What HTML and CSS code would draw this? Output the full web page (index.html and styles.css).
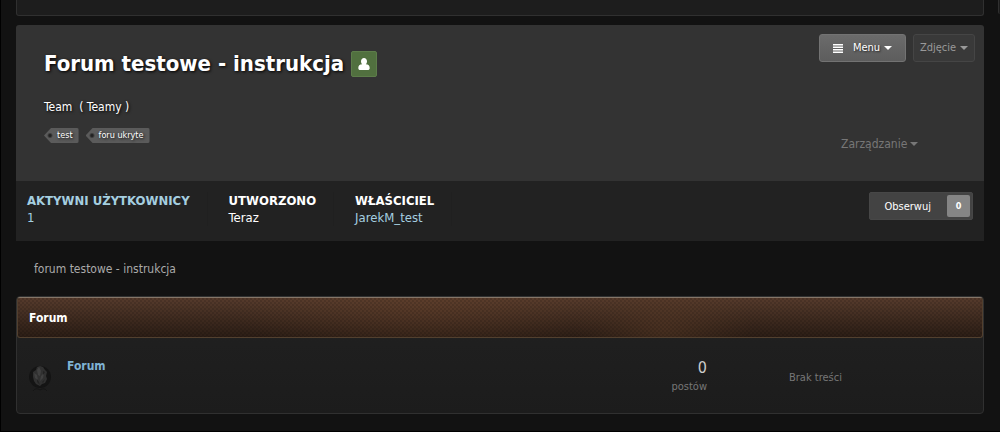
FILE: index.html
```html
<!DOCTYPE html>
<html lang="pl">
<head>
    <meta charset="utf-8">
    <title>Forum testowe - instrukcja</title>
    <meta name="viewport" content="width=device-width">
    <link rel="stylesheet" href="styles.css">
</head>
<body>
    <div class="top-row">
        <div class="top-panel"></div>
        <div class="top-side"></div>
    </div>

    <div class="wrap">
        <div class="club-header">
            <div class="club-info">
                <div class="club-title">
                    <h1>Forum testowe - instrukcja</h1>
                    <span class="member-badge">
                        <svg width="12" height="12" viewBox="0 0 12 12" fill="#fff"><path d="M6 0C7.700 0 9 1.300 9 3.200C9 4.600 8.500 5.600 7.800 6.200C10.500 6.200 11.700 7.800 11.700 9.900C11.700 11.200 10.900 12 9.700 12H2.300C1.100 12 .3 11.200 .3 9.900C.3 7.800 1.500 6.200 4.200 6.200C3.500 5.600 3 4.600 3 3.200C3 1.300 4.300 0 6 0z"/></svg>
                    </span>
                </div>
                <div class="club-type">Team&nbsp; ( Teamy )</div>
                <div class="tags">
                    <a href="#" class="tag">test</a>
                    <a href="#" class="tag">foru ukryte</a>
                </div>
            </div>
            <div class="club-actions">
                <div class="btn-row">
                    <button type="button" class="btn btn-menu">
                        <svg width="10" height="9" viewBox="0 0 10 9" fill="#fff"><path d="M0 0h10v1.500H0zM0 2.500h10V4H0zM0 5h10v1.500H0zM0 7.500h10V9H0z"/></svg>
                        <span>Menu</span><i class="caret"></i>
                    </button>
                    <button type="button" class="btn btn-photo"><span>Zdjęcie</span><i class="caret"></i></button>
                </div>
                <button type="button" class="btn-manage"><span>Zarządzanie</span><i class="caret"></i></button>
            </div>
        </div>

        <div class="club-stats">
            <div class="stat">
                <a href="#"><strong>AKTYWNI UŻYTKOWNICY</strong><br>1</a>
            </div>
            <div class="stat"><strong>UTWORZONO</strong><br>Teraz</div>
            <div class="stat"><strong>WŁAŚCICIEL</strong><br><a href="#">JarekM_test</a></div>
            <button type="button" class="btn-follow">Obserwuj <span class="count">0</span></button>
        </div>

        <div class="breadcrumb">forum testowe - instrukcja</div>

        <div class="forum-box">
            <h2>Forum</h2>
            <table class="forum-table">
                <tr>
                    <td class="cell-icon">
                        <svg width="26" height="28" viewBox="0 0 26 28">
                            <circle cx="13" cy="13" r="11" fill="#141414"/>
                            <path d="M6 8l3-2 1-3 3-1 3 1 2 3 2 2-1 4 1 3-2 4-3 1-2 2-4-2-2-3-1-4z" fill="#303030"/>
                            <path d="M10 6l2-3 2 4-1 5-2-1zM14 12l3-3-1 5-3 3zM7 9l3 2 1 5-3-2z" fill="#404040"/>
                            <path d="M10 15l2 3 1 3-3-3zM16 7l2 1-2 3zM15 18l3-3-2 4z" fill="#222"/>
                            <path d="M6 27q3-4 7-1 4-3 7 1" fill="none" stroke="#151515"/>
                        </svg>
                    </td>
                    <td class="cell-name"><a href="#">Forum</a></td>
                    <td class="cell-posts"><span class="num">0</span>postów</td>
                    <td class="cell-last">Brak treści</td>
                </tr>
            </table>
        </div>
    </div>
</body>
</html>
```

FILE: styles.css
```css
* {
    box-sizing: border-box;
}
body {
    min-height: 100vh;
    margin: 0;
    border-left: 1px solid #000;
    border-bottom: 1px solid #000;
    background: #121212;
    color: #fff;
    font: 12px/18px "DejaVu Sans Condensed", Tahoma, "DejaVu Sans", sans-serif;
}
a {
    color: #a5cfe0;
    text-decoration: none;
}
button {
    font: inherit;
    color: #fff;
    cursor: pointer;
}
.top-row {
    display: flex;
    gap: 14px;
    padding-left: 15px;
    margin-bottom: 9px;
}
.top-panel {
    flex: 1;
    height: 16px;
    background: #1d1d1d;
    border: 1px solid #303030;
    border-top: 0;
    border-radius: 0 0 3px 3px;
}
.top-side {
    width: 2px;
    height: 14px;
    border-left: 1px solid #303030;
    background: #1d1d1d;
    border-radius: 0 0 0 3px;
}
.wrap {
    margin: 0 16px 0 15px;
}

/* club header */
.club-header {
    display: flex;
    justify-content: space-between;
    min-height: 156px;
    padding: 9px 9px 0 28px;
    background: #333;
    border-radius: 3px 3px 0 0;
    text-shadow: 1px 1px 3px #000;
}
.club-info {
    padding-top: 17px;
}
.club-title {
    display: flex;
    align-items: center;
    gap: 7px;
    margin-bottom: 21px;
}
h1 {
    margin: 0;
    font-size: 22px;
    line-height: 26px;
}
.member-badge {
    display: flex;
    align-items: center;
    justify-content: center;
    width: 26px;
    height: 26px;
    background: #51703f;
    border: 1px solid #5d7d4a;
    border-radius: 2px;
}
.tags {
    display: flex;
    gap: 7px;
    margin-top: 12px;
}
.tag {
    height: 15px;
    padding: 0 6px 0 13px;
    background: radial-gradient(circle at 6px 50%, #222 1px, transparent 3px), #5b5b5b;
    border-radius: 2px;
    clip-path: polygon(0 50%, 7px 0, 100% 0, 100% 100%, 7px 100%);
    color: #fff;
    font-size: 9px;
    line-height: 15px;
}
.caret {
    border: 4px solid transparent;
    border-top-color: currentColor;
    border-bottom: 0;
}
.btn-row {
    display: flex;
    gap: 7px;
}
.btn {
    display: flex;
    align-items: center;
    justify-content: center;
    gap: 4px;
    height: 28px;
    padding: 0 7px;
    border: 1px solid #737373;
    border-radius: 3px;
    background: linear-gradient(#6b6b6b, #5d5d5d);
    font-size: 11px;
}
.btn-menu {
    width: 87px;
    text-shadow: 1px 1px 2px #222;
}
.btn-menu svg {
    margin-right: 6px;
}
.btn-photo {
    width: 62px;
    background: #393939;
    border-color: #454545;
    color: #999;
}
.btn-manage {
    display: flex;
    align-items: center;
    gap: 3px;
    margin-top: 73px;
    padding: 0 22px;
    border: 0;
    background: none;
    color: #777;
}

/* stats */
.club-stats {
    display: flex;
    align-items: flex-start;
    min-height: 60px;
    padding: 11px 11px 0 0;
    background: #222;
    font-size: 13px;
    line-height: 17px;
}
.stat {
    padding: 0 17px 0 21px;
    border-right: 1px solid #202020;
}
.stat:first-child {
    padding-left: 11px;
}
.btn-follow {
    display: flex;
    align-items: center;
    gap: 16px;
    height: 28px;
    margin-left: auto;
    padding: 0 2px 0 14px;
    border: 1px solid #474747;
    border-radius: 2px;
    background: #434343;
    font-size: 11px;
}
.count {
    width: 23px;
    height: 22px;
    border-radius: 2px;
    background: #858585;
    font-size: 9px;
    font-weight: bold;
    line-height: 22px;
    text-align: center;
}
.breadcrumb {
    padding: 19px 18px 18px;
    color: #aaa;
}

/* forum list */
.forum-box {
    border: 1px solid #303030;
    border-radius: 4px;
    background: linear-gradient(#212121, #1c1c1c);
}
h2 {
    height: 41px;
    margin: 0;
    padding-left: 11px;
    border: 1px solid #52402f;
    border-top-color: #857668;
    border-radius: 3px;
    background:
        radial-gradient(circle at 1px 1px, rgba(0, 0, 0, .12) 1px, transparent 1px) 0 0 / 4px 4px,
        radial-gradient(circle at 1px 1px, rgba(0, 0, 0, .12) 1px, transparent 1px) 2px 2px / 4px 4px,
        radial-gradient(ellipse 190px 60px at 42% 20%, rgba(105, 67, 43, .4), transparent),
        radial-gradient(ellipse 90px 60px at 67% 80%, rgba(91, 60, 39, .5), transparent),
        linear-gradient(#563b2c, #2b1d15);
    background-clip: padding-box;
    font-size: 12px;
    line-height: 40px;
}
.forum-table {
    width: 100%;
    height: 75px;
    border-collapse: collapse;
    table-layout: fixed;
}
.forum-table td {
    padding: 4px 0 0;
    color: #777;
    font-size: 11px;
    line-height: 18px;
}
.cell-icon {
    width: 50px;
}
.cell-icon svg {
    display: block;
    margin-left: 10px;
}
.forum-table .cell-name {
    padding-top: 19px;
    vertical-align: top;
    font-size: 12px;
    font-weight: bold;
}
.cell-name a {
    color: #7fb2d4;
}
.forum-table .cell-posts {
    width: 100px;
    padding-top: 2px;
    text-align: right;
}
.num {
    display: block;
    color: #ccc;
    font-size: 16px;
    line-height: 20px;
}
.forum-table .cell-last {
    width: 276px;
    padding-left: 82px;
}
```
